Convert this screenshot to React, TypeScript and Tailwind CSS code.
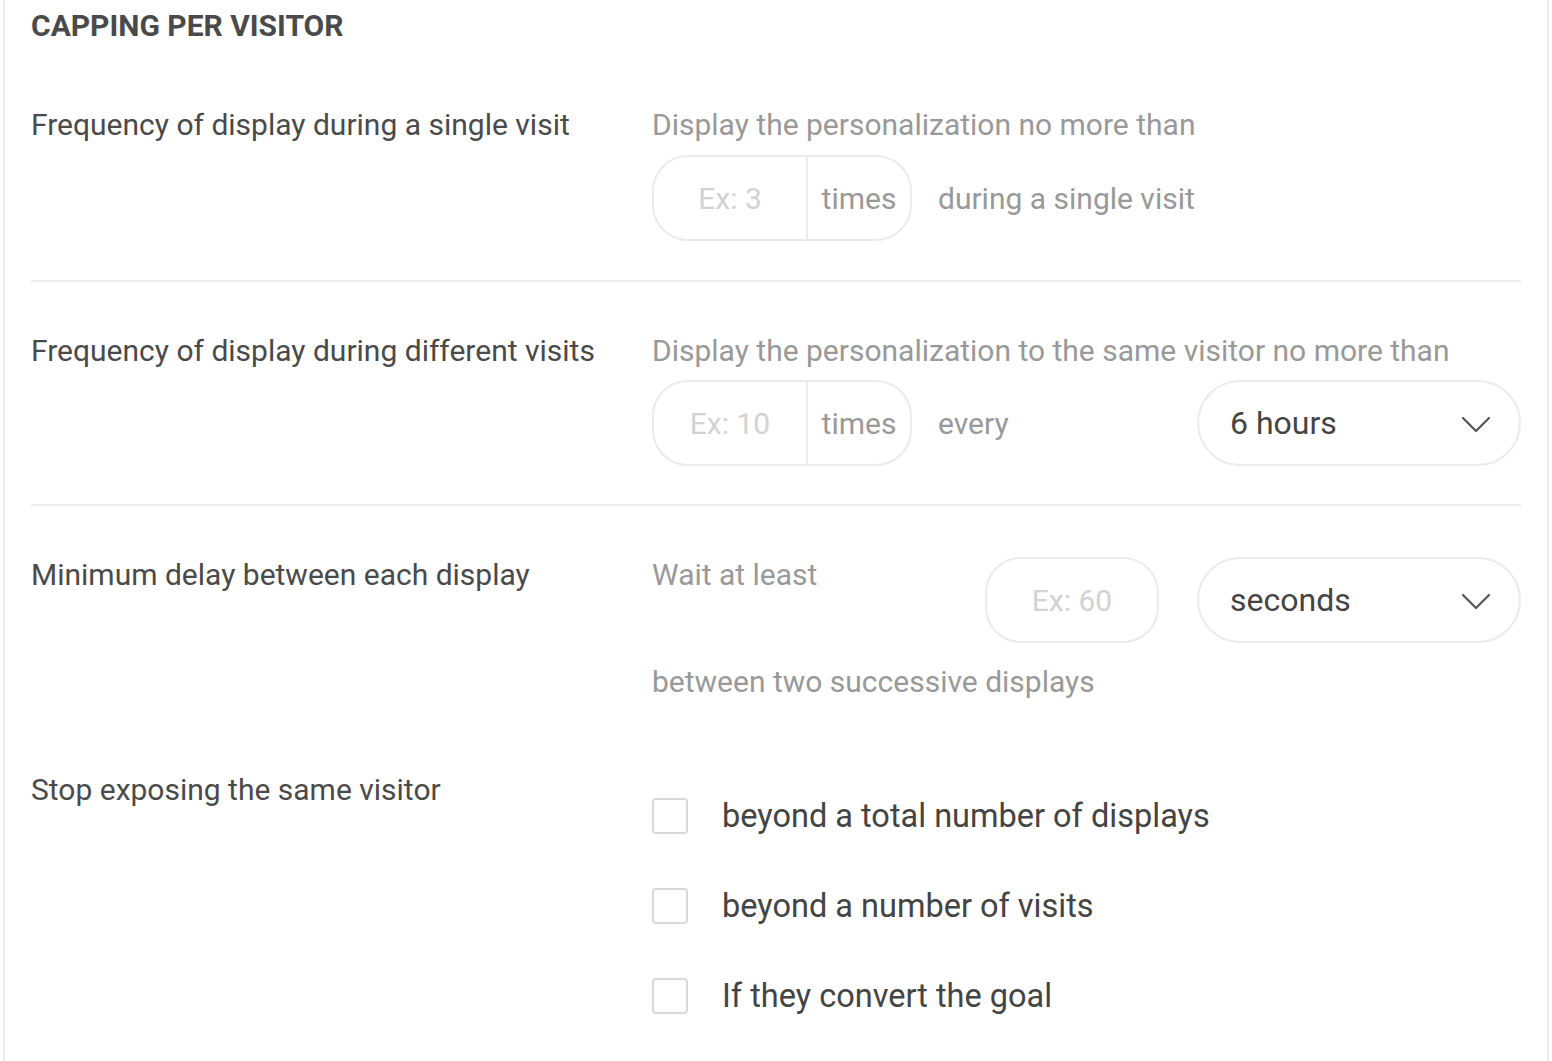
import React from "react"

const font = { fontFamily: "Roboto, 'Liberation Sans', sans-serif" }

const Chevron: React.FC = () => (
  <svg width="30" height="18" viewBox="0 0 30 18" fill="none" className="mt-[4px] shrink-0">
    <path d="M2 2 L15 15 L28 2" stroke="#555" strokeWidth="2.2" strokeLinecap="round" strokeLinejoin="round" />
  </svg>
)

const Select: React.FC<{ value: string }> = ({ value }) => (
  <div className="flex h-[86px] w-[324px] items-center justify-between rounded-[43px] border-2 border-[#ebebeb] bg-white pl-[31px] pr-[28px]">
    <span className="text-[32px] text-[#444]">{value}</span>
    <Chevron />
  </div>
)

const TimesInput: React.FC<{ placeholder: string }> = ({ placeholder }) => (
  <div className="flex h-[86px] w-[260px] items-stretch rounded-[36px] border-2 border-[#ebebeb] bg-white">
    <div className="flex w-[154px] items-center justify-center border-r-2 border-[#ebebeb] text-[30px] text-[#d2d2d2]">
      {placeholder}
    </div>
    <div className="flex flex-1 items-center justify-center text-[30px] text-[#999]">times</div>
  </div>
)

const Checkbox: React.FC<{ label: string }> = ({ label }) => (
  <label className="flex h-[90px] items-center gap-[34px]">
    <span className="h-[36px] w-[36px] shrink-0 rounded-[4px] border-2 border-[#d9d9d9] bg-white" />
    <span className="text-[32.5px] text-[#444]">{label}</span>
  </label>
)

export default function App() {
  return (
    <div className="min-h-screen bg-white pl-[3px]" style={font}>
      <div className="w-[1546px] border-x-2 border-[#ebebeb] px-[26px] pb-[40px]">
        <h2 className="h-[52px] text-[30px] font-bold leading-[52px] text-[#4a4a4a]">CAPPING PER VISITOR</h2>

        {/* single visit */}
        <div className="mt-[53px] grid grid-cols-[621px_1fr] border-b-2 border-[#ececec] pb-[39px]">
          <div className="text-[30px] leading-[40px] text-[#4a4a4a]">Frequency of display during a single visit</div>
          <div>
            <div className="text-[30px] leading-[40px] text-[#999]">Display the personalization no more than</div>
            <div className="mt-[10px] flex items-center">
              <TimesInput placeholder="Ex: 3" />
              <span className="ml-[26px] text-[30px] text-[#999]">during a single visit</span>
            </div>
          </div>
        </div>

        {/* different visits */}
        <div className="grid grid-cols-[621px_1fr] border-b-2 border-[#ececec] pb-[38px] pt-[49px]">
          <div className="text-[30px] leading-[40px] text-[#4a4a4a]">Frequency of display during different visits</div>
          <div>
            <div className="text-[30px] leading-[40px] text-[#999]">Display the personalization to the same visitor no more than</div>
            <div className="mt-[9px] flex items-center">
              <TimesInput placeholder="Ex: 10" />
              <span className="ml-[26px] w-[259px] text-[30px] text-[#999]">every</span>
              <Select value="6 hours" />
            </div>
          </div>
        </div>

        {/* minimum delay */}
        <div className="grid grid-cols-[621px_1fr] pt-[49px]">
          <div className="text-[30px] leading-[40px] text-[#4a4a4a]">Minimum delay between each display</div>
          <div>
            <div className="flex items-start">
              <span className="w-[333px] text-[30px] leading-[40px] text-[#999]">Wait at least</span>
              <div className="mt-[2px] flex h-[86px] w-[174px] items-center justify-center rounded-[36px] border-2 border-[#ebebeb] text-[30px] text-[#d2d2d2]">
                Ex: 60
              </div>
              <div className="ml-[38px] mt-[2px]">
                <Select value="seconds" />
              </div>
            </div>
            <div className="mt-[19px] text-[30px] leading-[40px] text-[#999]">between two successive displays</div>
          </div>
        </div>

        {/* stop exposing */}
        <div className="grid grid-cols-[621px_1fr] pt-[68px]">
          <div className="text-[30px] leading-[40px] text-[#4a4a4a]">Stop exposing the same visitor</div>
          <div className="pt-[1px]">
            <Checkbox label="beyond a total number of displays" />
            <Checkbox label="beyond a number of visits" />
            <Checkbox label="If they convert the goal" />
          </div>
        </div>
      </div>
    </div>
  )
}
